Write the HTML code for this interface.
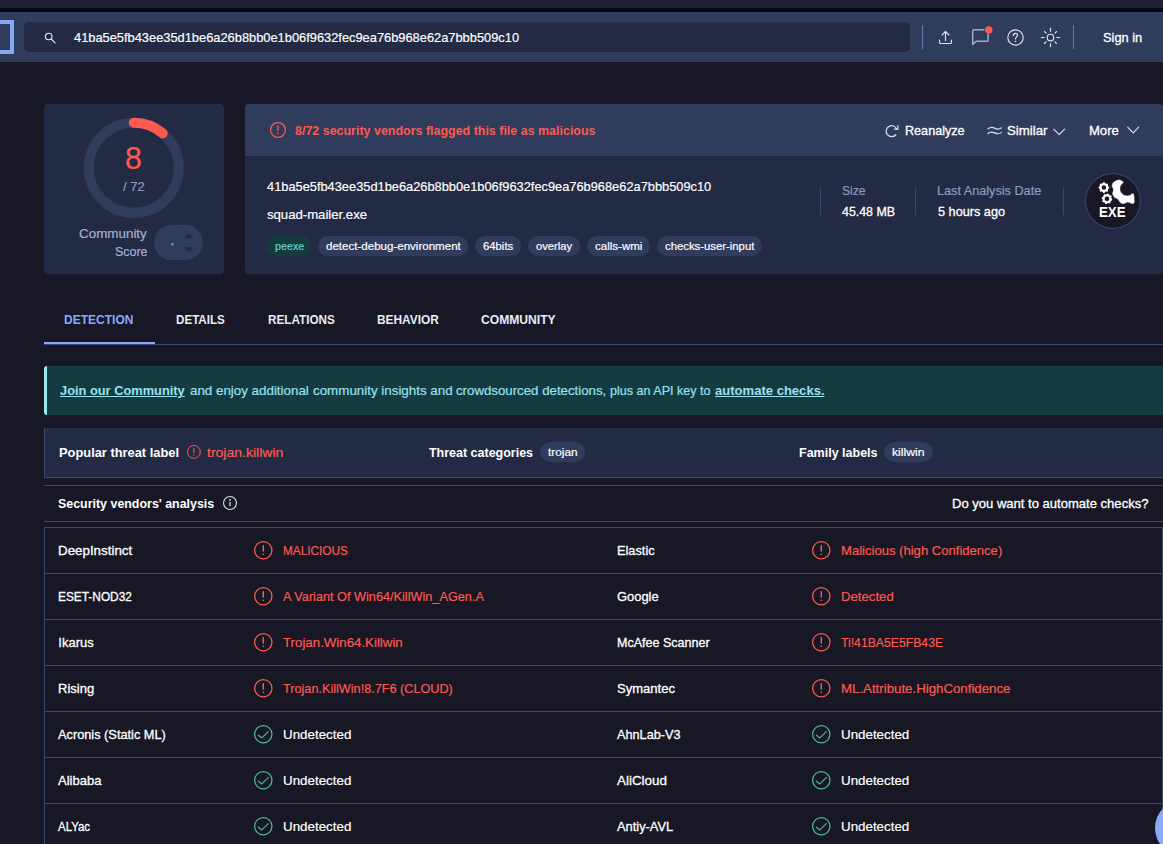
<!DOCTYPE html>
<html lang="en"><head><meta charset="utf-8"><title>VirusTotal - File - 41ba5e5fb43ee35d1be6a26b8bb0e1b06f9632fec9ea76b968e62a7bbb509c10</title>
<style>
html,body{margin:0;padding:0;background:#171725;overflow:hidden;}
#app{position:relative;width:1163px;height:844px;overflow:hidden;background:#171725;font-family:"Liberation Sans", sans-serif;}
.b{position:absolute;display:block;}
.t{position:absolute;display:block;white-space:nowrap;line-height:1;transform-origin:0 0;}
</style></head><body><div id="app">
<div class="b" style="left:0px;top:0px;width:1163px;height:8px;background:#1e2236;"></div>
<div class="b" style="left:0px;top:8px;width:1163px;height:4px;background:#030616;"></div>
<div class="b" style="left:0px;top:12px;width:1163px;height:50px;background:#2f3c5b;"></div>
<div class="b" style="left:-10px;top:20px;width:24px;height:34px;background:transparent;box-sizing:border-box;border:4px solid #86aaf8;"></div>
<div class="b" style="left:24px;top:22px;width:886px;height:30px;background:#232b44;border-radius:5px;"></div>
<svg class="b" style="left:42px;top:30px" width="16" height="16" viewBox="0 0 16 16" fill="none" stroke="#e6e9f2" stroke-width="1.1"><circle cx="6.7" cy="6.5" r="3.3"/><path d="M9.2 9 L13 12.9" stroke-linecap="round"/></svg>
<div class="b" style="left:922px;top:25px;width:1px;height:24px;background:#6379b0;"></div>
<div class="b" style="left:1073px;top:25px;width:1px;height:24px;background:#6379b0;"></div>
<svg class="b" style="left:935px;top:27px" width="20" height="20" viewBox="0 0 20 20" fill="none" stroke="#dde1f0" stroke-width="1.15" stroke-linecap="round" stroke-linejoin="round"><path d="M4.5 13v2.2a1.3 1.3 0 0 0 1.3 1.3h9.4a1.3 1.3 0 0 0 1.3-1.3V13"/><path d="M10.5 13.6V4.6"/><path d="M7.1 8l3.4-3.5 3.4 3.5"/></svg>
<svg class="b" style="left:968px;top:24px" width="28" height="24" viewBox="0 0 28 24" fill="none" stroke="#a0accd" stroke-width="1.5" stroke-linejoin="round"><path d="M16.5 5.7H5.8a1.1 1.1 0 0 0-1.1 1.1v13.6l3.3-3.1h11a1.1 1.1 0 0 0 1.1-1.1V9.5"/><circle cx="20.8" cy="5.9" r="3.7" fill="#ff5a50" stroke="none"/></svg>
<svg class="b" style="left:1005px;top:27px" width="21" height="21" viewBox="0 0 21 21" fill="none" stroke="#dde1f0" stroke-width="1.2"><circle cx="10.5" cy="10.5" r="7.7"/><path d="M8.3 8.4c0-1.3 1-2.1 2.2-2.1s2.1.8 2.1 2c0 1.6-2.1 1.7-2.1 3.7" stroke-linecap="round"/><circle cx="10.5" cy="14.3" r=".8" fill="#dde1f0" stroke="none"/></svg>
<svg class="b" style="left:1040px;top:27px" width="21" height="21" viewBox="-10.5 -10.5 21 21" fill="none" stroke="#dde1f0" stroke-width="1.15" stroke-linecap="round"><circle r="3.3"/><path d="M0 -6.3V-9.2" transform="rotate(0)"/><path d="M0 -6.3V-8.5" transform="rotate(45)"/><path d="M0 -6.3V-9.2" transform="rotate(90)"/><path d="M0 -6.3V-8.5" transform="rotate(135)"/><path d="M0 -6.3V-9.2" transform="rotate(180)"/><path d="M0 -6.3V-8.5" transform="rotate(225)"/><path d="M0 -6.3V-9.2" transform="rotate(270)"/><path d="M0 -6.3V-8.5" transform="rotate(315)"/></svg>
<div class="b" style="left:44px;top:104px;width:180px;height:170px;background:#232b44;border-radius:4px;"></div>
<svg class="b" style="left:0;top:0" width="1163" height="300" viewBox="0 0 1163 300" fill="none"><circle cx="133.8" cy="167.8" r="45" stroke="#2f3c5b" stroke-width="10"/><path d="M133.8 122.80000000000001 A45 45 0 0 1 162.73 133.33" stroke="#ff5a50" stroke-width="10" stroke-linecap="round"/></svg>
<div class="b" style="left:154px;top:225px;width:49px;height:35px;background:#2f3c5b;border-radius:18px;"></div>
<svg class="b" style="left:154px;top:225px" width="49" height="35" viewBox="154 225 49 35"><circle cx="172.5" cy="244.3" r="1.5" fill="#7182ad"/><path d="M184.1 238.2L189 233.2L194 238.2Z M184.1 247L194 247L189 252Z" fill="#232b44"/></svg>
<div class="b" style="left:245px;top:104px;width:918px;height:170px;background:#232b44;border-radius:4px;overflow:hidden;"></div>
<div class="b" style="left:245px;top:104px;width:918px;height:51.5px;background:#2f3c5b;border-radius:4px 4px 0 0;"></div>
<div class="b" style="left:267px;top:236.3px;width:43.9px;height:19.7px;background:#143c3f;border-radius:10px;"></div>
<div class="b" style="left:318.1px;top:236.3px;width:150.1px;height:19.7px;background:#2f3c5b;border-radius:10px;"></div>
<div class="b" style="left:475px;top:236.3px;width:46px;height:19.7px;background:#2f3c5b;border-radius:10px;"></div>
<div class="b" style="left:528px;top:236.3px;width:52.3px;height:19.7px;background:#2f3c5b;border-radius:10px;"></div>
<div class="b" style="left:587.3px;top:236.3px;width:62.4px;height:19.7px;background:#2f3c5b;border-radius:10px;"></div>
<div class="b" style="left:657.1px;top:236.3px;width:104.8px;height:19.7px;background:#2f3c5b;border-radius:10px;"></div>
<div class="b" style="left:820px;top:187px;width:1px;height:28px;background:#3a4668;"></div>
<div class="b" style="left:915px;top:187px;width:1px;height:28px;background:#3a4668;"></div>
<div class="b" style="left:1063px;top:187px;width:1px;height:28px;background:#3a4668;"></div>
<svg class="b" style="left:267.6px;top:120.3px" width="20" height="20" viewBox="-10 -10 20 20" fill="none" stroke="#ff5a50" stroke-width="1.2"><circle r="7.4"/><path d="M0 -4.40V1.12" stroke-width="1.38"/><circle cy="3.36" r="0.79" fill="#ff5a50" stroke="none"/></svg>
<svg class="b" style="left:884px;top:123px" width="16" height="16" viewBox="0 0 16 16" fill="none" stroke="#dde1f0" stroke-width="1.2" stroke-linecap="round" stroke-linejoin="round"><path d="M12.77 6.32A5.5 5.5 0 1 0 11.81 11.74"/><path d="M13.9 2.6V6.2H10.5"/></svg>
<svg class="b" style="left:987px;top:123px" width="16" height="16" viewBox="0 0 16 16" fill="none" stroke="#dde1f0" stroke-width="1.2" stroke-linecap="round"><path d="M1 5.9c2.2-1.9 4.4-1.9 6.8-.6s4.4 1.3 6.7-.5"/><path d="M1 10.5c2.2-1.9 4.4-1.9 6.8-.6s4.4 1.3 6.7-.5"/></svg>
<svg class="b" style="left:1052px;top:126px" width="14" height="10" viewBox="0 0 14 10" fill="none" stroke="#dde1f0" stroke-width="1.15" stroke-linecap="round" stroke-linejoin="round"><path d="M1.8 3.2L7.2 8.6L12.6 3.2"/></svg>
<svg class="b" style="left:1126px;top:124px" width="14" height="10" viewBox="0 0 14 10" fill="none" stroke="#dde1f0" stroke-width="1.15" stroke-linecap="round" stroke-linejoin="round"><path d="M1.7 3.2L7.2 8.8L12.7 3.2"/></svg>
<svg class="b" style="left:1083px;top:171px" width="60" height="60" viewBox="1083 171 60 60"><circle cx="1113" cy="201" r="27.4" fill="#171725" stroke="#3a4d78" stroke-width="1"/><path d="M1109.22 187.08L1109.22 188.12L1108.21 188.91L1107.87 189.72L1108.04 190.99L1107.29 191.74L1106.02 191.57L1105.21 191.91L1104.42 192.92L1103.38 192.92L1102.59 191.91L1101.78 191.57L1100.51 191.74L1099.76 190.99L1099.93 189.72L1099.59 188.91L1098.58 188.12L1098.58 187.08L1099.59 186.29L1099.93 185.48L1099.76 184.21L1100.51 183.46L1101.78 183.63L1102.59 183.29L1103.38 182.28L1104.42 182.28L1105.21 183.29L1106.02 183.63L1107.29 183.46L1108.04 184.21L1107.87 185.48L1108.21 186.29ZM1106.15 187.60A2.25 2.25 0 1 0 1101.65 187.60A2.25 2.25 0 1 0 1106.15 187.60Z" fill="#fff" fill-rule="evenodd"/><path d="M1112.32 199.34L1112.11 200.37L1110.96 200.94L1110.47 201.67L1110.38 202.95L1109.50 203.53L1108.29 203.11L1107.42 203.28L1106.46 204.12L1105.43 203.91L1104.86 202.76L1104.13 202.27L1102.85 202.18L1102.27 201.30L1102.69 200.09L1102.52 199.22L1101.68 198.26L1101.89 197.23L1103.04 196.66L1103.53 195.93L1103.62 194.65L1104.50 194.07L1105.71 194.49L1106.58 194.32L1107.54 193.48L1108.57 193.69L1109.14 194.84L1109.87 195.33L1111.15 195.42L1111.73 196.30L1111.31 197.51L1111.48 198.38ZM1109.35 198.80A2.35 2.35 0 1 0 1104.65 198.80A2.35 2.35 0 1 0 1109.35 198.80Z" fill="#fff" fill-rule="evenodd"/><path d="M1118.09 180.04 L1115.67 181.05 L1113.45 182.46 L1112.45 184.07 L1112.04 186.09 L1113.05 188.1 L1113.57 190.12 L1112.85 192.13 L1112.65 193.74 L1113.45 195.76 L1114.66 197.57 L1116.48 198.17 L1118.09 199.18 L1119.3 200.99 L1120.3 202.61 L1122.92 203.81 L1124.94 203.21 L1126.15 202.4 L1127.76 202.0 L1129.77 202.4 L1131.38 203.61 L1133.8 203.21 L1134.2 201.8 L1134.0 196.56 L1133.4 193.74 L1132.39 193.74 A7.3 7.3 0 1 1 1123.32 182.46 L1122.92 181.66 L1121.31 180.65 L1119.7 180.04Z" fill="#fff" stroke="#fff" stroke-width="0.5" stroke-linejoin="round"/></svg>
<div class="b" style="left:44px;top:344px;width:1119px;height:1px;background:#3a4a70;"></div>
<div class="b" style="left:44px;top:342px;width:111px;height:2px;background:#86aaf8;"></div>
<div class="b" style="left:44px;top:366px;width:1119px;height:49px;background:#143c40;border-radius:4px 0 0 4px;"></div>
<div class="b" style="left:44px;top:366px;width:3px;height:49px;background:#96e8ee;border-radius:4px 0 0 4px;"></div>
<div class="b" style="left:44px;top:428px;width:1119px;height:50px;background:#232b44;box-sizing:border-box;border-left:1px solid #3a4a70;border-bottom:1px solid #3a4a70;"></div>
<div class="b" style="left:540.1px;top:442.3px;width:44.9px;height:19.4px;background:#2f3c5b;border-radius:10px;"></div>
<div class="b" style="left:884.3px;top:442.3px;width:48.9px;height:19.4px;background:#2f3c5b;border-radius:10px;"></div>
<svg class="b" style="left:184.9px;top:442.7px" width="17.8" height="17.8" viewBox="-8.9 -8.9 17.8 17.8" fill="none" stroke="#ff5a50" stroke-width="1.0"><circle r="6.4"/><path d="M0 -3.80V0.97" stroke-width="1.15"/><circle cy="2.90" r="0.66" fill="#ff5a50" stroke="none"/></svg>
<div class="b" style="left:44px;top:485px;width:1119px;height:1px;background:#3a4a70;"></div>
<div class="b" style="left:44px;top:521px;width:1119px;height:1px;background:#3a4a70;"></div>
<svg class="b" style="left:221.8px;top:494.8px" width="16" height="16" viewBox="-8 -8 16 16" fill="none" stroke="#dde1f0" stroke-width="1.1"><circle r="6.45"/><path d="M0 -1V3.3" stroke-width="1.3"/><circle cy="-3.1" r=".85" fill="#dde1f0" stroke="none"/></svg>
<div class="b" style="left:44px;top:527px;width:1119px;height:330px;background:transparent;box-sizing:border-box;border:1px solid #3a4a70;"></div>
<div class="b" style="left:45px;top:573px;width:1117px;height:1px;background:#3a4a70;"></div>
<div class="b" style="left:45px;top:619px;width:1117px;height:1px;background:#3a4a70;"></div>
<div class="b" style="left:45px;top:665px;width:1117px;height:1px;background:#3a4a70;"></div>
<div class="b" style="left:45px;top:711px;width:1117px;height:1px;background:#3a4a70;"></div>
<div class="b" style="left:45px;top:757px;width:1117px;height:1px;background:#3a4a70;"></div>
<div class="b" style="left:45px;top:803px;width:1117px;height:1px;background:#3a4a70;"></div>
<svg class="b" style="left:251.6px;top:538.6px" width="22.6" height="22.6" viewBox="-11.3 -11.3 22.6 22.6" fill="none" stroke="#ff5a50" stroke-width="1.25"><circle r="8.675"/><path d="M0 -5.12V1.30" stroke-width="1.44"/><circle cy="3.91" r="0.83" fill="#ff5a50" stroke="none"/></svg>
<svg class="b" style="left:809.9px;top:538.6px" width="22.6" height="22.6" viewBox="-11.3 -11.3 22.6 22.6" fill="none" stroke="#ff5a50" stroke-width="1.25"><circle r="8.675"/><path d="M0 -5.12V1.30" stroke-width="1.44"/><circle cy="3.91" r="0.83" fill="#ff5a50" stroke="none"/></svg>
<svg class="b" style="left:251.6px;top:584.6px" width="22.6" height="22.6" viewBox="-11.3 -11.3 22.6 22.6" fill="none" stroke="#ff5a50" stroke-width="1.25"><circle r="8.675"/><path d="M0 -5.12V1.30" stroke-width="1.44"/><circle cy="3.91" r="0.83" fill="#ff5a50" stroke="none"/></svg>
<svg class="b" style="left:809.9px;top:584.6px" width="22.6" height="22.6" viewBox="-11.3 -11.3 22.6 22.6" fill="none" stroke="#ff5a50" stroke-width="1.25"><circle r="8.675"/><path d="M0 -5.12V1.30" stroke-width="1.44"/><circle cy="3.91" r="0.83" fill="#ff5a50" stroke="none"/></svg>
<svg class="b" style="left:251.6px;top:630.6px" width="22.6" height="22.6" viewBox="-11.3 -11.3 22.6 22.6" fill="none" stroke="#ff5a50" stroke-width="1.25"><circle r="8.675"/><path d="M0 -5.12V1.30" stroke-width="1.44"/><circle cy="3.91" r="0.83" fill="#ff5a50" stroke="none"/></svg>
<svg class="b" style="left:809.9px;top:630.6px" width="22.6" height="22.6" viewBox="-11.3 -11.3 22.6 22.6" fill="none" stroke="#ff5a50" stroke-width="1.25"><circle r="8.675"/><path d="M0 -5.12V1.30" stroke-width="1.44"/><circle cy="3.91" r="0.83" fill="#ff5a50" stroke="none"/></svg>
<svg class="b" style="left:251.6px;top:676.6px" width="22.6" height="22.6" viewBox="-11.3 -11.3 22.6 22.6" fill="none" stroke="#ff5a50" stroke-width="1.25"><circle r="8.675"/><path d="M0 -5.12V1.30" stroke-width="1.44"/><circle cy="3.91" r="0.83" fill="#ff5a50" stroke="none"/></svg>
<svg class="b" style="left:809.9px;top:676.6px" width="22.6" height="22.6" viewBox="-11.3 -11.3 22.6 22.6" fill="none" stroke="#ff5a50" stroke-width="1.25"><circle r="8.675"/><path d="M0 -5.12V1.30" stroke-width="1.44"/><circle cy="3.91" r="0.83" fill="#ff5a50" stroke="none"/></svg>
<svg class="b" style="left:251.6px;top:722.6px" width="22.6" height="22.6" viewBox="-11.3 -11.3 22.6 22.6" fill="none" stroke="#4bb8a0" stroke-width="1.25"><circle r="8.675"/><path d="M-4.9 0.9L-1.5 3.6L5 -2.7" stroke-linecap="round" stroke-linejoin="round"/></svg>
<svg class="b" style="left:809.9px;top:722.6px" width="22.6" height="22.6" viewBox="-11.3 -11.3 22.6 22.6" fill="none" stroke="#4bb8a0" stroke-width="1.25"><circle r="8.675"/><path d="M-4.9 0.9L-1.5 3.6L5 -2.7" stroke-linecap="round" stroke-linejoin="round"/></svg>
<svg class="b" style="left:251.6px;top:768.6px" width="22.6" height="22.6" viewBox="-11.3 -11.3 22.6 22.6" fill="none" stroke="#4bb8a0" stroke-width="1.25"><circle r="8.675"/><path d="M-4.9 0.9L-1.5 3.6L5 -2.7" stroke-linecap="round" stroke-linejoin="round"/></svg>
<svg class="b" style="left:809.9px;top:768.6px" width="22.6" height="22.6" viewBox="-11.3 -11.3 22.6 22.6" fill="none" stroke="#4bb8a0" stroke-width="1.25"><circle r="8.675"/><path d="M-4.9 0.9L-1.5 3.6L5 -2.7" stroke-linecap="round" stroke-linejoin="round"/></svg>
<svg class="b" style="left:251.6px;top:814.6px" width="22.6" height="22.6" viewBox="-11.3 -11.3 22.6 22.6" fill="none" stroke="#4bb8a0" stroke-width="1.25"><circle r="8.675"/><path d="M-4.9 0.9L-1.5 3.6L5 -2.7" stroke-linecap="round" stroke-linejoin="round"/></svg>
<svg class="b" style="left:809.9px;top:814.6px" width="22.6" height="22.6" viewBox="-11.3 -11.3 22.6 22.6" fill="none" stroke="#4bb8a0" stroke-width="1.25"><circle r="8.675"/><path d="M-4.9 0.9L-1.5 3.6L5 -2.7" stroke-linecap="round" stroke-linejoin="round"/></svg>
<div class="b" style="left:1155px;top:800px;width:56px;height:56px;background:#89abf9;border-radius:50%;"></div>
<span class="t" style="left:73.80px;top:31.00px;font-size:13px;color:#ffffff;transform:scaleX(0.9881);-webkit-text-stroke:0.18px;">41ba5e5fb43ee35d1be6a26b8bb0e1b06f9632fec9ea76b968e62a7bbb509c10</span>
<span class="t" style="left:1102.60px;top:31.00px;font-size:13px;color:#ffffff;transform:scaleX(0.9843);-webkit-text-stroke:0.3px;">Sign in</span>
<span class="t" style="left:125.04px;top:142.82px;font-size:31.4px;color:#ff5a50;transform:scaleX(0.9625);-webkit-text-stroke:0.18px;">8</span>
<span class="t" style="left:122.90px;top:179.80px;font-size:13px;color:#8d9bc0;transform:scaleX(0.9975);-webkit-text-stroke:0.18px;">/ 72</span>
<span class="t" style="left:78.60px;top:227.20px;font-size:13px;color:#a3b1d6;transform:scaleX(1.0312);-webkit-text-stroke:0.18px;">Community</span>
<span class="t" style="left:114.60px;top:245.00px;font-size:13px;color:#a3b1d6;transform:scaleX(0.9576);-webkit-text-stroke:0.18px;">Score</span>
<span class="t" style="left:294.90px;top:124.00px;font-size:13px;color:#ff5a50;transform:scaleX(0.9584);font-weight:700;">8/72 security vendors flagged this file as malicious</span>
<span class="t" style="left:904.83px;top:124.20px;font-size:13px;color:#ffffff;transform:scaleX(0.9702);-webkit-text-stroke:0.3px;">Reanalyze</span>
<span class="t" style="left:1007.30px;top:124.20px;font-size:13px;color:#ffffff;transform:scaleX(1.0175);-webkit-text-stroke:0.3px;">Similar</span>
<span class="t" style="left:1088.70px;top:124.20px;font-size:13px;color:#ffffff;transform:scaleX(1.0039);-webkit-text-stroke:0.3px;">More</span>
<span class="t" style="left:266.70px;top:180.20px;font-size:13px;color:#ffffff;transform:scaleX(0.9863);-webkit-text-stroke:0.18px;">41ba5e5fb43ee35d1be6a26b8bb0e1b06f9632fec9ea76b968e62a7bbb509c10</span>
<span class="t" style="left:266.70px;top:208.40px;font-size:13px;color:#ffffff;transform:scaleX(1.0104);-webkit-text-stroke:0.18px;">squad-mailer.exe</span>
<span class="t" style="left:274.50px;top:241.39px;font-size:11px;color:#68d3d0;transform:scaleX(0.9748);-webkit-text-stroke:0.18px;">peexe</span>
<span class="t" style="left:326.00px;top:241.39px;font-size:11px;color:#ffffff;transform:scaleX(1.0494);-webkit-text-stroke:0.18px;">detect-debug-environment</span>
<span class="t" style="left:482.70px;top:241.39px;font-size:11px;color:#ffffff;transform:scaleX(1.0284);-webkit-text-stroke:0.18px;">64bits</span>
<span class="t" style="left:535.70px;top:241.39px;font-size:11px;color:#ffffff;transform:scaleX(1.0178);-webkit-text-stroke:0.18px;">overlay</span>
<span class="t" style="left:594.80px;top:241.39px;font-size:11px;color:#ffffff;transform:scaleX(1.0475);-webkit-text-stroke:0.18px;">calls-wmi</span>
<span class="t" style="left:664.60px;top:241.39px;font-size:11px;color:#ffffff;transform:scaleX(1.0293);-webkit-text-stroke:0.18px;">checks-user-input</span>
<span class="t" style="left:841.90px;top:184.00px;font-size:13px;color:#8d9bc0;transform:scaleX(0.9338);-webkit-text-stroke:0.18px;">Size</span>
<span class="t" style="left:841.90px;top:205.00px;font-size:13px;color:#ffffff;transform:scaleX(0.9532);-webkit-text-stroke:0.3px;">45.48 MB</span>
<span class="t" style="left:936.73px;top:184.00px;font-size:13px;color:#8d9bc0;transform:scaleX(0.9743);-webkit-text-stroke:0.18px;">Last Analysis Date</span>
<span class="t" style="left:937.70px;top:205.00px;font-size:13px;color:#ffffff;transform:scaleX(0.9761);-webkit-text-stroke:0.3px;">5 hours ago</span>
<span class="t" style="left:64.40px;top:313.20px;font-size:13px;color:#86aaf8;transform:scaleX(0.9247);font-weight:700;">DETECTION</span>
<span class="t" style="left:176.20px;top:313.20px;font-size:13px;color:#e9ebf5;transform:scaleX(0.8931);font-weight:700;">DETAILS</span>
<span class="t" style="left:267.70px;top:313.20px;font-size:13px;color:#e9ebf5;transform:scaleX(0.9023);font-weight:700;">RELATIONS</span>
<span class="t" style="left:377.00px;top:313.20px;font-size:13px;color:#e9ebf5;transform:scaleX(0.9126);font-weight:700;">BEHAVIOR</span>
<span class="t" style="left:481.00px;top:313.20px;font-size:13px;color:#e9ebf5;transform:scaleX(0.9318);font-weight:700;">COMMUNITY</span>
<span class="t" style="left:60.40px;top:384.40px;font-size:13px;color:#98e2ee;transform:scaleX(0.9870);font-weight:700;text-decoration:underline;">Join our Community</span>
<span class="t" style="left:190.00px;top:384.40px;font-size:13px;color:#98e2ee;transform:scaleX(1.0271);-webkit-text-stroke:0.18px;">and enjoy additional</span>
<span class="t" style="left:312.90px;top:384.40px;font-size:13px;color:#98e2ee;transform:scaleX(1.0279);-webkit-text-stroke:0.18px;">community insights and</span>
<span class="t" style="left:456.20px;top:384.40px;font-size:13px;color:#98e2ee;transform:scaleX(1.0191);-webkit-text-stroke:0.18px;">crowdsourced detections,</span>
<span class="t" style="left:610.10px;top:384.40px;font-size:13px;color:#98e2ee;transform:scaleX(0.9660);-webkit-text-stroke:0.18px;">plus an API key to</span>
<span class="t" style="left:714.60px;top:384.40px;font-size:13px;color:#98e2ee;transform:scaleX(1.0038);font-weight:700;text-decoration:underline;">automate checks.</span>
<span class="t" style="left:58.90px;top:446.20px;font-size:13px;color:#ffffff;transform:scaleX(0.9888);font-weight:700;">Popular threat label</span>
<span class="t" style="left:207.20px;top:446.20px;font-size:13px;color:#ff5a50;transform:scaleX(1.0783);-webkit-text-stroke:0.18px;">trojan.killwin</span>
<span class="t" style="left:428.90px;top:446.20px;font-size:13px;color:#ffffff;transform:scaleX(0.9598);font-weight:700;">Threat categories</span>
<span class="t" style="left:547.60px;top:446.69px;font-size:11px;color:#ffffff;transform:scaleX(1.0731);-webkit-text-stroke:0.18px;">trojan</span>
<span class="t" style="left:799.00px;top:446.20px;font-size:13px;color:#ffffff;transform:scaleX(0.9617);font-weight:700;">Family labels</span>
<span class="t" style="left:892.30px;top:446.69px;font-size:11px;color:#ffffff;transform:scaleX(1.1089);-webkit-text-stroke:0.18px;">killwin</span>
<span class="t" style="left:57.90px;top:497.00px;font-size:13px;color:#ffffff;transform:scaleX(0.9555);font-weight:700;">Security vendors&#x27; analysis</span>
<span class="t" style="left:952.10px;top:496.80px;font-size:13px;color:#ffffff;transform:scaleX(1.0031);-webkit-text-stroke:0.3px;">Do you want to automate checks?</span>
<span class="t" style="left:58.30px;top:544.00px;font-size:13px;color:#ffffff;transform:scaleX(1.0268);-webkit-text-stroke:0.3px;">DeepInstinct</span>
<span class="t" style="left:282.50px;top:544.00px;font-size:13px;color:#ff5a50;transform:scaleX(0.9062);-webkit-text-stroke:0.18px;">MALICIOUS</span>
<span class="t" style="left:616.60px;top:544.00px;font-size:13px;color:#ffffff;transform:scaleX(0.9822);-webkit-text-stroke:0.3px;">Elastic</span>
<span class="t" style="left:840.80px;top:544.00px;font-size:13px;color:#ff5a50;transform:scaleX(1.0051);-webkit-text-stroke:0.18px;">Malicious (high Confidence)</span>
<span class="t" style="left:58.30px;top:590.00px;font-size:13px;color:#ffffff;transform:scaleX(0.9134);-webkit-text-stroke:0.3px;">ESET-NOD32</span>
<span class="t" style="left:282.50px;top:590.00px;font-size:13px;color:#ff5a50;transform:scaleX(0.9767);-webkit-text-stroke:0.18px;">A Variant Of Win64/KillWin_AGen.A</span>
<span class="t" style="left:616.60px;top:590.00px;font-size:13px;color:#ffffff;transform:scaleX(0.9930);-webkit-text-stroke:0.3px;">Google</span>
<span class="t" style="left:840.80px;top:590.00px;font-size:13px;color:#ff5a50;transform:scaleX(1.0135);-webkit-text-stroke:0.18px;">Detected</span>
<span class="t" style="left:58.30px;top:636.00px;font-size:13px;color:#ffffff;transform:scaleX(1.0000);-webkit-text-stroke:0.3px;">Ikarus</span>
<span class="t" style="left:282.50px;top:636.00px;font-size:13px;color:#ff5a50;transform:scaleX(1.0209);-webkit-text-stroke:0.18px;">Trojan.Win64.Killwin</span>
<span class="t" style="left:616.60px;top:636.00px;font-size:13px;color:#ffffff;transform:scaleX(0.9641);-webkit-text-stroke:0.3px;">McAfee Scanner</span>
<span class="t" style="left:840.80px;top:636.00px;font-size:13px;color:#ff5a50;transform:scaleX(0.9398);-webkit-text-stroke:0.18px;">Ti!41BA5E5FB43E</span>
<span class="t" style="left:58.30px;top:682.00px;font-size:13px;color:#ffffff;transform:scaleX(1.0002);-webkit-text-stroke:0.3px;">Rising</span>
<span class="t" style="left:282.50px;top:682.00px;font-size:13px;color:#ff5a50;transform:scaleX(0.9741);-webkit-text-stroke:0.18px;">Trojan.KillWin!8.7F6 (CLOUD)</span>
<span class="t" style="left:616.60px;top:682.00px;font-size:13px;color:#ffffff;transform:scaleX(1.0017);-webkit-text-stroke:0.3px;">Symantec</span>
<span class="t" style="left:840.80px;top:682.00px;font-size:13px;color:#ff5a50;transform:scaleX(1.0195);-webkit-text-stroke:0.18px;">ML.Attribute.HighConfidence</span>
<span class="t" style="left:58.30px;top:728.00px;font-size:13px;color:#ffffff;transform:scaleX(0.9820);-webkit-text-stroke:0.3px;">Acronis (Static ML)</span>
<span class="t" style="left:282.50px;top:728.00px;font-size:13px;color:#ffffff;transform:scaleX(1.0277);-webkit-text-stroke:0.18px;">Undetected</span>
<span class="t" style="left:616.60px;top:728.00px;font-size:13px;color:#ffffff;transform:scaleX(0.9765);-webkit-text-stroke:0.3px;">AhnLab-V3</span>
<span class="t" style="left:840.80px;top:728.00px;font-size:13px;color:#ffffff;transform:scaleX(1.0262);-webkit-text-stroke:0.18px;">Undetected</span>
<span class="t" style="left:58.30px;top:774.00px;font-size:13px;color:#ffffff;transform:scaleX(1.0014);-webkit-text-stroke:0.3px;">Alibaba</span>
<span class="t" style="left:282.50px;top:774.00px;font-size:13px;color:#ffffff;transform:scaleX(1.0277);-webkit-text-stroke:0.18px;">Undetected</span>
<span class="t" style="left:616.60px;top:774.00px;font-size:13px;color:#ffffff;transform:scaleX(1.0315);-webkit-text-stroke:0.3px;">AliCloud</span>
<span class="t" style="left:840.80px;top:774.00px;font-size:13px;color:#ffffff;transform:scaleX(1.0262);-webkit-text-stroke:0.18px;">Undetected</span>
<span class="t" style="left:58.30px;top:820.00px;font-size:13px;color:#ffffff;transform:scaleX(0.8814);-webkit-text-stroke:0.3px;">ALYac</span>
<span class="t" style="left:282.50px;top:820.00px;font-size:13px;color:#ffffff;transform:scaleX(1.0277);-webkit-text-stroke:0.18px;">Undetected</span>
<span class="t" style="left:616.60px;top:820.00px;font-size:13px;color:#ffffff;transform:scaleX(0.9893);-webkit-text-stroke:0.3px;">Antiy-AVL</span>
<span class="t" style="left:840.80px;top:820.00px;font-size:13px;color:#ffffff;transform:scaleX(1.0262);-webkit-text-stroke:0.18px;">Undetected</span>
<span class="t" style="left:1099.20px;top:205.35px;font-size:14px;font-weight:700;color:#fff;transform:scaleX(0.9503);">EXE</span>
</div></body></html>
